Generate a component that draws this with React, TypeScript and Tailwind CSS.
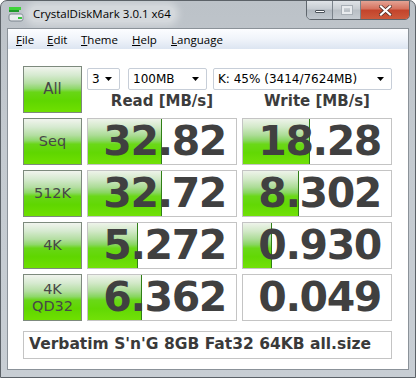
import { ReactNode } from "react"

type Row = { label: ReactNode; read: string; readBar: number; write: string; writeBar: number }

const rows: Row[] = [
  { label: "Seq", read: "32.82", readBar: 74, write: "18.28", writeBar: 67 },
  { label: "512K", read: "32.72", readBar: 74, write: "8.302", writeBar: 56 },
  { label: "4K", read: "5.272", readBar: 50, write: "0.930", writeBar: 29 },
  {
    label: (
      <span className="flex flex-col items-center leading-[17px]">
        <span>4K</span>
        <span>QD32</span>
      </span>
    ),
    read: "6.362",
    readBar: 54,
    write: "0.049",
    writeBar: 0,
  },
]

const greenButton =
  "flex items-center justify-center border border-[#7d8a7d] bg-[linear-gradient(to_bottom,#f1f4ee_0%,#d6ead0_18%,#b4dea2_36%,#8fd86a_48%,#68d616_56%,#5fd600_75%,#6fe000_100%)] text-[#474747] font-['DejaVu_Sans',sans-serif] text-[14.5px]"

const greenBar =
  "absolute left-0 top-0 bottom-0 border-r border-[#2f7f16] bg-[linear-gradient(to_bottom,#eef3ea_0%,#d2e9c8_18%,#acdc96_36%,#88d660_48%,#6ad818_56%,#62d804_75%,#72e108_100%)]"

function Score({ value, bar }: { value: string; bar: number }) {
  return (
    <div className="relative h-[47px] border border-[#c4c4c4] bg-white overflow-hidden">
      {bar > 0 && <div className={greenBar} style={{ width: bar }} />}
      <div className="relative h-full flex items-center justify-end pr-[10px] font-['DejaVu_Sans',sans-serif] font-bold text-[41px] tracking-[-1.4px] text-[#404040]">
        {value}
      </div>
    </div>
  )
}

function Select({ text, className }: { text: string; className: string }) {
  return (
    <div
      className={`h-[22px] flex items-center justify-between border border-[#c7ced8] rounded-[2px] bg-white pl-[4px] pr-[6px] font-['DejaVu_Sans',sans-serif] text-[12px] text-black ${className}`}
    >
      <span>{text}</span>
      <svg width="8" height="4" viewBox="0 0 8 4">
        <path d="M0 0h7L3.5 4z" fill="#000" />
      </svg>
    </div>
  )
}

export default function App() {
  return (
    <div className="w-[416px] h-[378px] flex flex-col border border-[#5c6268] rounded-t-[7px] bg-[linear-gradient(to_bottom,#bcc2c8,#c4cad0_40%,#c8ced4)] overflow-hidden">
      {/* title bar */}
      <div className="h-[27px] flex items-start justify-between">
        <div className="flex items-center pl-[7px] pt-[5px] gap-[5px]">
          <svg width="16" height="16" viewBox="0 0 16 16">
            <rect x="1" y="1" width="12" height="3" fill="#3fd23a" />
            <rect x="1" y="4" width="10" height="2" fill="#1e9a2a" />
            <rect x="1" y="8" width="14" height="7" rx="2" fill="#e9ecef" stroke="#7d868f" />
            <rect x="10" y="11" width="4" height="2" fill="#34c43a" />
          </svg>
          <span className="px-[4px] rounded-full bg-[#d4d8dc] shadow-[0_0_6px_4px_#d4d8dc] font-['Open_Sans',sans-serif] text-[11.5px] leading-[16px] text-black">
            CrystalDiskMark 3.0.1 x64
          </span>
        </div>
        <div className="flex mr-[5px] -mt-px h-[20px] border border-[#5f666d] rounded-b-[5px] overflow-hidden">
          <div className="w-[26px] flex items-center justify-center bg-[linear-gradient(to_bottom,#dfe3e7,#c6ccd2_45%,#b1b8bf_50%,#c0c7ce)] border-r border-[#7b838b]">
            <div className="mt-[3px] w-[10px] h-[3px] bg-white border border-[#4a525a] rounded-[1px]" />
          </div>
          <div className="w-[28px] flex items-center justify-center bg-[linear-gradient(to_bottom,#dfe3e7,#c8cdd2_45%,#b9bfc5_50%,#c6ccd2)] border-r border-[#7b838b]">
            <div className="w-[10px] h-[8px] border-[2px] border-[#e8ebee] outline outline-1 outline-[#a8afb6]" />
          </div>
          <div className="w-[48px] flex items-center justify-center bg-[linear-gradient(to_bottom,#e4a394,#d5705c_45%,#c3432b_50%,#cc5a3c)]">
            <svg width="13" height="11" viewBox="0 0 13 11">
              <path d="M2 1.5l9 8M11 1.5l-9 8" stroke="#4a2a22" strokeWidth="3.6" strokeLinecap="square" />
              <path d="M2 1.5l9 8M11 1.5l-9 8" stroke="#fff" strokeWidth="2.2" strokeLinecap="square" />
            </svg>
          </div>
        </div>
      </div>

      {/* client area */}
      <div className="mx-[6px] h-[342px] border border-[#8b9299] bg-white flex flex-col">
        <div className="h-[20px] flex items-end pb-[2px] pl-[8px] bg-[linear-gradient(to_bottom,#fcfdff,#f0f4fa_50%,#dce5f1)] font-['Open_Sans',sans-serif] text-[11.5px] leading-[15px] text-black">
          <span className="w-[31px]">
            <u>F</u>ile
          </span>
          <span className="w-[34px]">
            <u>E</u>dit
          </span>
          <span className="w-[51px]">
            <u>T</u>heme
          </span>
          <span className="w-[39px]">
            <u>H</u>elp
          </span>
          <span>
            <u>L</u>anguage
          </span>
        </div>

        <div className="pl-[15px] pt-[17px] grid grid-cols-[59px_150px_150px] gap-x-[5px] gap-y-[5px]">
          <div className={`h-[47px] ${greenButton} text-[15px]`}>All</div>
          <div className="col-span-2 flex flex-col">
            <div className="mt-[2px] flex">
              <Select text="3" className="w-[33px]" />
              <Select text="100MB" className="ml-[8px] w-[79px]" />
              <Select text="K: 45% (3414/7624MB)" className="ml-[6px] w-[179px]" />
            </div>
            <div className="flex-1 grid grid-cols-2 gap-x-[5px] items-center font-['DejaVu_Sans',sans-serif] font-bold text-[15px] text-[#3c3c3c]">
              <div className="text-center">Read [MB/s]</div>
              <div className="text-center">Write [MB/s]</div>
            </div>
          </div>

          {rows.map((r, i) => (
            <div key={i} className="contents">
              <div className={`h-[47px] ${greenButton}`}>{r.label}</div>
              <Score value={r.read} bar={r.readBar} />
              <Score value={r.write} bar={r.writeBar} />
            </div>
          ))}

          <div className="col-span-3 mt-[5px] h-[28px] flex items-center border border-[#c4c4c4] pl-[5px] font-['DejaVu_Sans',sans-serif] font-bold text-[15.5px] text-[#3a3a3a]">
            Verbatim S'n'G 8GB Fat32 64KB all.size
          </div>
        </div>
      </div>
    </div>
  )
}
